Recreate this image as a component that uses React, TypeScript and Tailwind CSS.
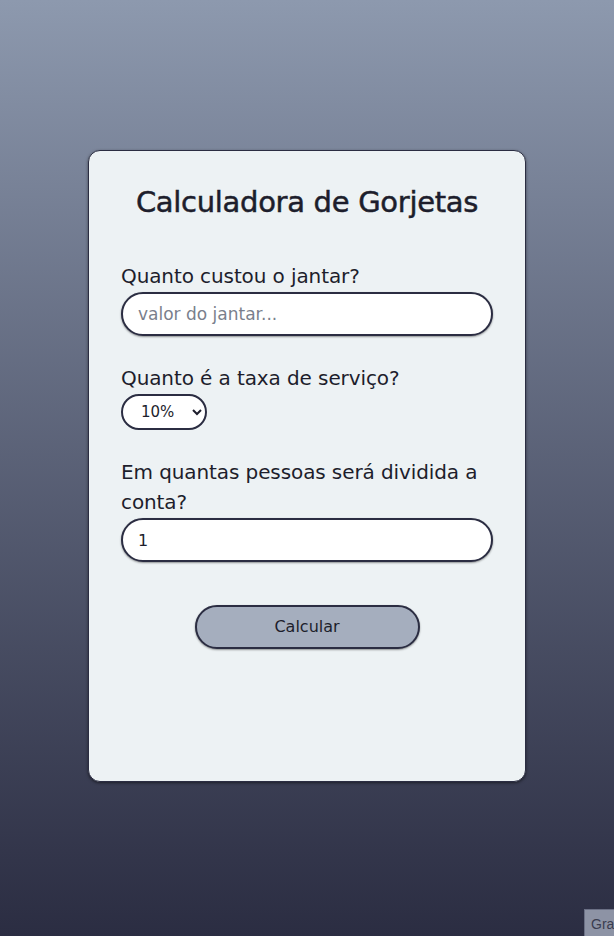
import React, { useState } from 'react';

export default function App() {
  const [bill, setBill] = useState('');
  const [tip, setTip] = useState('10');
  const [people, setPeople] = useState('1');

  return (
    <div className="min-h-screen w-full bg-gradient-to-b from-[#8d99ae] to-[#2b2d42] flex items-center justify-center font-['DejaVu_Sans',sans-serif] text-[#1d1e2c] relative">
      <div className="w-[438px] h-[632px] -mt-[4px] bg-[#edf2f4] border border-[#2b2d42] rounded-[12px] shadow-[0_1px_3px_rgba(0,0,0,0.5)] px-[32px] pt-[34px] flex flex-col">
        <h1 className="text-center text-[29px] leading-[34px] tracking-[-0.3px] [-webkit-text-stroke:0.5px_#1d1e2c]">Calculadora de Gorjetas</h1>

        <div className="mt-[42px] flex flex-col">
          <label className="text-[20px] leading-[30px] tracking-[-0.1px]">Quanto custou o jantar?</label>
          <input
            value={bill}
            onChange={e => setBill(e.target.value)}
            placeholder="valor do jantar..."
            className="mt-[1px] h-[44px] w-full rounded-full bg-white border-2 border-[#2b2d42] shadow-[0_1px_2px_rgba(0,0,0,0.4)] px-[15px] text-[17px] outline-none placeholder:text-[#7a7f8c]"
          />
        </div>

        <div className="mt-[27px] flex flex-col items-start">
          <label className="text-[20px] leading-[30px] tracking-[-0.1px]">Quanto é a taxa de serviço?</label>
          <select
            value={tip}
            onChange={e => setTip(e.target.value)}
            className="mt-[1px] h-[36px] w-[86px] rounded-full bg-white border-2 border-[#2b2d42] pl-[14px] pr-[6px] text-[15px] outline-none"
          >
            <option value="10">10%</option>
            <option value="15">15%</option>
            <option value="20">20%</option>
          </select>
        </div>

        <div className="mt-[27px] flex flex-col">
          <label className="text-[20px] leading-[30px] tracking-[-0.1px]">Em quantas pessoas será dividida a conta?</label>
          <input
            value={people}
            onChange={e => setPeople(e.target.value)}
            className="mt-[1px] h-[44px] w-full rounded-full bg-white border-2 border-[#2b2d42] shadow-[0_1px_2px_rgba(0,0,0,0.4)] px-[15px] text-[16px] outline-none"
          />
        </div>

        <button className="mt-[43px] self-center w-[225px] h-[44px] rounded-full bg-[#a5aebe] border-2 border-[#2b2d42] shadow-[0_1px_2px_rgba(0,0,0,0.4)] text-[16px]">
          Calcular
        </button>
      </div>

      <div className="absolute right-0 bottom-0 w-[30px] h-[27px] bg-[#8d93a5] border-l border-t border-[#6b7085] overflow-hidden pl-[6px] pt-[4px] text-[14px] text-[#3a3d50] font-['Liberation_Sans',sans-serif]">
        Gra
      </div>
    </div>
  );
}
